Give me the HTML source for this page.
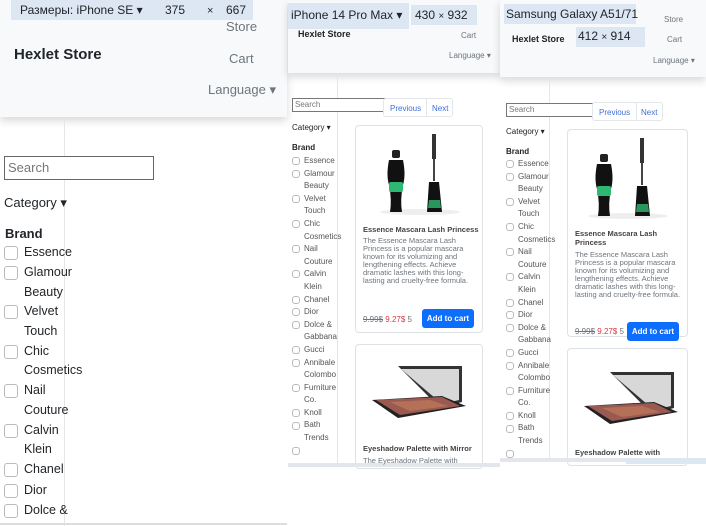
<!DOCTYPE html>
<html><head><meta charset="utf-8"><style>
*{box-sizing:border-box;margin:0;padding:0}
body{width:706px;height:526px;background:#fff;position:relative;overflow:hidden;font-family:"Liberation Sans",sans-serif;color:#212529}
.a{position:absolute;white-space:nowrap}
.hdr{position:absolute;background:#f8f9fa;box-shadow:0 4px 8px rgba(0,0,0,.15)}
.tb{position:absolute;background:#dde6f3;color:#333}
.vl{position:absolute;width:1px;background:#e6e6e6}
.cb{position:absolute;border:1px solid #bbb;border-radius:3px;background:#fff}
.card{position:absolute;border:1px solid #dee2e6;border-radius:4px;background:#fff;overflow:hidden}
.btn{position:absolute;background:#0d6efd;color:#fff;border-radius:3px;text-align:center;font-weight:bold}
.grey{color:#6c757d}
</style></head><body>

<!-- Panel 1 -->
<div class="hdr" style="left:0;top:0;width:287px;height:117px"></div>
<div class="tb" style="left:11px;top:0;width:242px;height:20px"></div>
<div class="a" style="left:20px;top:3px;font-size:12px">Размеры: iPhone SE ▾</div>
<div class="a" style="left:165px;top:3px;font-size:12px">375</div>
<div class="a" style="left:207px;top:5px;font-size:11px">×</div>
<div class="a" style="left:226px;top:3px;font-size:12px">667</div>
<div class="a grey" style="left:226px;top:19px;font-size:13px">Store</div>
<div class="a" style="left:14px;top:46px;font-size:15px;font-weight:bold">Hexlet Store</div>
<div class="a grey" style="left:229px;top:51px;font-size:13px">Cart</div>
<div class="a grey" style="left:208px;top:82px;font-size:13px">Language ▾</div>
<div class="vl" style="left:64px;top:117px;height:409px"></div>
<div class="a" style="left:4px;top:156px;width:150px;height:24px;border:1px solid #666;background:#fff;font-size:13px;color:#777;padding:3px 3px">Search</div>
<div class="a" style="left:4px;top:195px;font-size:13px">Category ▾</div>
<div class="a" style="left:5px;top:226px;font-size:13px;font-weight:bold">Brand</div>

<!-- Panel 2 -->
<div class="hdr" style="left:288px;top:0;width:212px;height:73px"></div>
<div class="tb" style="left:288px;top:3px;width:121px;height:26px"></div>
<div class="a" style="left:291px;top:8px;font-size:12px">iPhone 14 Pro Max ▾</div>
<div class="tb" style="left:411px;top:5px;width:66px;height:20px"></div>
<div class="a" style="left:415px;top:8px;font-size:12px">430 <span style="font-size:10px">×</span> 932</div>
<div class="a" style="left:298px;top:29px;font-size:9px;font-weight:bold">Hexlet Store</div>
<div class="a grey" style="left:461px;top:31px;font-size:8px">Cart</div>
<div class="a grey" style="left:449px;top:51px;font-size:8px">Language ▾</div>
<div class="vl" style="left:337px;top:73px;height:390px"></div>
<div class="a" style="left:292px;top:98px;width:95px;height:14px;border:1px solid #777;border-right:none;background:#fff;font-size:8px;color:#777;padding:1px 2px">Search</div>
<div class="a" style="left:383px;top:98px;width:70px;height:19px;border:1px solid #e3e6ea;border-radius:3px;font-size:8px;color:#3d6fd8;background:#fff"><span style="position:absolute;left:6px;top:5px">Previous</span><span style="position:absolute;left:42px;top:0;height:17px;border-left:1px solid #e3e6ea"></span><span style="position:absolute;left:48px;top:5px">Next</span></div>
<div class="a" style="left:292px;top:123px;font-size:8px">Category ▾</div>
<div class="a" style="left:292px;top:143px;font-size:8px;font-weight:bold">Brand</div>
<div class="card" style="left:355px;top:125px;width:128px;height:208px"></div>
<div class="card" style="left:355px;top:344px;width:128px;height:125px"></div>
<div class="a" style="left:288px;top:463px;width:212px;height:4px;background:#e3e6ea"></div>

<!-- Panel 3 -->
<div class="hdr" style="left:500px;top:0;width:206px;height:77px"></div>
<div class="tb" style="left:504px;top:4px;width:132px;height:20px"></div>
<div class="a" style="left:506px;top:7px;font-size:12px">Samsung Galaxy A51/71</div>
<div class="a grey" style="left:664px;top:15px;font-size:8px">Store</div>
<div class="a" style="left:512px;top:34px;font-size:9px;font-weight:bold">Hexlet Store</div>
<div class="tb" style="left:576px;top:27px;width:69px;height:20px"></div>
<div class="a" style="left:578px;top:29px;font-size:12px">412 <span style="font-size:10px">×</span> 914</div>
<div class="a grey" style="left:667px;top:35px;font-size:8px">Cart</div>
<div class="a grey" style="left:653px;top:56px;font-size:8px">Language ▾</div>
<div class="vl" style="left:549px;top:77px;height:385px"></div>
<div class="a" style="left:506px;top:103px;width:96px;height:14px;border:1px solid #777;border-right:none;background:#fff;font-size:8px;color:#777;padding:1px 2px">Search</div>
<div class="a" style="left:592px;top:102px;width:71px;height:19px;border:1px solid #e3e6ea;border-radius:3px;font-size:8px;color:#3d6fd8;background:#fff"><span style="position:absolute;left:6px;top:5px">Previous</span><span style="position:absolute;left:43px;top:0;height:17px;border-left:1px solid #e3e6ea"></span><span style="position:absolute;left:48px;top:5px">Next</span></div>
<div class="a" style="left:506px;top:127px;font-size:8px">Category ▾</div>
<div class="a" style="left:506px;top:147px;font-size:8px;font-weight:bold">Brand</div>
<div class="card" style="left:567px;top:129px;width:121px;height:208px"></div>
<div class="card" style="left:567px;top:348px;width:121px;height:118px"></div>
<div class="a" style="left:500px;top:458px;width:126px;height:4px;background:#e3e6ea"></div>
<div class="a" style="left:626px;top:458px;width:80px;height:6px;background:#dde6f3"></div>

<!-- Card contents panel 2 -->
<svg class="a" style="left:370px;top:130px" width="100" height="86" viewBox="0 0 100 86">
<ellipse cx="50" cy="82" rx="40" ry="3" fill="#eee"/>
<rect x="22" y="20" width="8" height="8" rx="2" fill="#222"/>
<path d="M19 30 Q16 45 19 55 Q22 70 20 82 L32 82 Q30 70 33 55 Q36 45 33 30 Z" fill="#111"/>
<rect x="19" y="52" width="14" height="10" rx="2" fill="#2fb872"/>
<rect x="62" y="4" width="4" height="25" fill="#333"/>
<rect x="63" y="29" width="2" height="22" fill="#444"/>
<path d="M57 82 L59 52 L69 52 L72 82 Z" fill="#111"/>
<path d="M59 70 L70 70 L71 78 L58 78 Z" fill="#2fb872" opacity=".8"/>
</svg>
<div class="a" style="left:363px;top:225px;font-size:7.5px;font-weight:bold;color:#444">Essence Mascara Lash Princess</div>
<div class="a grey" style="left:363px;top:237px;font-size:7.5px;line-height:8px;white-space:normal;width:112px">The Essence Mascara Lash Princess is a popular mascara known for its volumizing and lengthening effects. Achieve dramatic lashes with this long-lasting and cruelty-free formula.</div>
<div class="a" style="left:363px;top:315px;font-size:8px"><span class="grey" style="text-decoration:line-through">9.99$</span> <span style="color:#dc3545">9.27$</span> <span class="grey">5</span></div>
<div class="btn" style="left:422px;top:309px;width:52px;height:19px;font-size:8px;line-height:19px">Add to cart</div>
<svg class="a" style="left:370px;top:362px" width="100" height="62" viewBox="0 0 100 62">
<path d="M28 4 L92 4 L92 40 L70 46 Z" fill="#333"/>
<path d="M31 7 L89 7 L89 38 L72 42 Z" fill="#d8d8d8"/>
<path d="M2 38 L72 34 L96 44 L28 56 Z" fill="#222"/>
<path d="M6 38 L72 35 L90 44 L30 53 Z" fill="#9a5a52"/>
<path d="M20 40 L60 38 L78 44 L40 49 Z" fill="#c07a5a" opacity=".7"/>
</svg>
<div class="a" style="left:363px;top:444px;font-size:7.5px;font-weight:bold;color:#444">Eyeshadow Palette with Mirror</div>
<div class="a grey" style="left:363px;top:456px;font-size:7.5px">The Eyeshadow Palette with</div>

<!-- Card contents panel 3 -->
<svg class="a" style="left:578px;top:134px" width="100" height="86" viewBox="0 0 100 86">
<ellipse cx="50" cy="82" rx="40" ry="3" fill="#eee"/>
<rect x="22" y="20" width="8" height="8" rx="2" fill="#222"/>
<path d="M19 30 Q16 45 19 55 Q22 70 20 82 L32 82 Q30 70 33 55 Q36 45 33 30 Z" fill="#111"/>
<rect x="19" y="52" width="14" height="10" rx="2" fill="#2fb872"/>
<rect x="62" y="4" width="4" height="25" fill="#333"/>
<rect x="63" y="29" width="2" height="22" fill="#444"/>
<path d="M57 82 L59 52 L69 52 L72 82 Z" fill="#111"/>
<path d="M59 70 L70 70 L71 78 L58 78 Z" fill="#2fb872" opacity=".8"/>
</svg>
<div class="a" style="left:575px;top:229px;font-size:7.5px;font-weight:bold;color:#444;line-height:9px">Essence Mascara Lash<br>Princess</div>
<div class="a grey" style="left:575px;top:251px;font-size:7.5px;line-height:8px;white-space:normal;width:108px">The Essence Mascara Lash Princess is a popular mascara known for its volumizing and lengthening effects. Achieve dramatic lashes with this long-lasting and cruelty-free formula.</div>
<div class="a" style="left:575px;top:327px;font-size:8px"><span class="grey" style="text-decoration:line-through">9.99$</span> <span style="color:#dc3545">9.27$</span> <span class="grey">5</span></div>
<div class="btn" style="left:627px;top:322px;width:52px;height:19px;font-size:8px;line-height:19px">Add to cart</div>
<svg class="a" style="left:582px;top:368px" width="100" height="62" viewBox="0 0 100 62">
<path d="M28 4 L92 4 L92 40 L70 46 Z" fill="#333"/>
<path d="M31 7 L89 7 L89 38 L72 42 Z" fill="#d8d8d8"/>
<path d="M2 38 L72 34 L96 44 L28 56 Z" fill="#222"/>
<path d="M6 38 L72 35 L90 44 L30 53 Z" fill="#9a5a52"/>
<path d="M20 40 L60 38 L78 44 L40 49 Z" fill="#c07a5a" opacity=".7"/>
</svg>
<div class="a" style="left:575px;top:448px;font-size:7.5px;font-weight:bold;color:#444">Eyeshadow Palette with</div>

<!-- Panel 1 bottom line -->
<div class="a" style="left:0;top:523px;width:287px;height:2px;background:#ddd"></div>

<!-- Brand lists -->
<div class="cb" style="left:4px;top:246px;width:14px;height:14px"></div><div class="a" style="left:24px;top:245px;font-size:12.5px">Essence</div>
<div class="cb" style="left:4px;top:266px;width:14px;height:14px"></div><div class="a" style="left:24px;top:265px;font-size:12.5px">Glamour</div><div class="a" style="left:24px;top:285px;font-size:12.5px">Beauty</div>
<div class="cb" style="left:4px;top:305px;width:14px;height:14px"></div><div class="a" style="left:24px;top:304px;font-size:12.5px">Velvet</div><div class="a" style="left:24px;top:324px;font-size:12.5px">Touch</div>
<div class="cb" style="left:4px;top:345px;width:14px;height:14px"></div><div class="a" style="left:24px;top:344px;font-size:12.5px">Chic</div><div class="a" style="left:24px;top:363px;font-size:12.5px">Cosmetics</div>
<div class="cb" style="left:4px;top:384px;width:14px;height:14px"></div><div class="a" style="left:24px;top:383px;font-size:12.5px">Nail</div><div class="a" style="left:24px;top:403px;font-size:12.5px">Couture</div>
<div class="cb" style="left:4px;top:424px;width:14px;height:14px"></div><div class="a" style="left:24px;top:423px;font-size:12.5px">Calvin</div><div class="a" style="left:24px;top:442px;font-size:12.5px">Klein</div>
<div class="cb" style="left:4px;top:463px;width:14px;height:14px"></div><div class="a" style="left:24px;top:462px;font-size:12.5px">Chanel</div>
<div class="cb" style="left:4px;top:484px;width:14px;height:14px"></div><div class="a" style="left:24px;top:483px;font-size:12.5px">Dior</div>
<div class="cb" style="left:4px;top:504px;width:14px;height:14px"></div><div class="a" style="left:24px;top:503px;font-size:12.5px">Dolce &amp;</div>

<div style="position:absolute;left:292px;top:155px;font-size:8px;line-height:12.6px;color:#555">
<div style="position:relative;padding-left:12px">
<span class="cb" style="left:0;top:2px;width:8px;height:8px"></span>Essence<br>
<span class="cb" style="left:0;top:15px;width:8px;height:8px"></span>Glamour<br>Beauty<br>
<span class="cb" style="left:0;top:40px;width:8px;height:8px"></span>Velvet<br>Touch<br>
<span class="cb" style="left:0;top:65px;width:8px;height:8px"></span>Chic<br>Cosmetics<br>
<span class="cb" style="left:0;top:90px;width:8px;height:8px"></span>Nail<br>Couture<br>
<span class="cb" style="left:0;top:115px;width:8px;height:8px"></span>Calvin<br>Klein<br>
<span class="cb" style="left:0;top:141px;width:8px;height:8px"></span>Chanel<br>
<span class="cb" style="left:0;top:153px;width:8px;height:8px"></span>Dior<br>
<span class="cb" style="left:0;top:166px;width:8px;height:8px"></span>Dolce &amp;<br>Gabbana<br>
<span class="cb" style="left:0;top:191px;width:8px;height:8px"></span>Gucci<br>
<span class="cb" style="left:0;top:204px;width:8px;height:8px"></span>Annibale<br>Colombo<br>
<span class="cb" style="left:0;top:229px;width:8px;height:8px"></span>Furniture<br>Co.<br>
<span class="cb" style="left:0;top:254px;width:8px;height:8px"></span>Knoll<br>
<span class="cb" style="left:0;top:267px;width:8px;height:8px"></span>Bath<br>Trends<br>
<span class="cb" style="left:0;top:292px;width:8px;height:8px"></span>&nbsp;
</div></div>

<div style="position:absolute;left:506px;top:158px;font-size:8px;line-height:12.6px;color:#555">
<div style="position:relative;padding-left:12px">
<span class="cb" style="left:0;top:2px;width:8px;height:8px"></span>Essence<br>
<span class="cb" style="left:0;top:15px;width:8px;height:8px"></span>Glamour<br>Beauty<br>
<span class="cb" style="left:0;top:40px;width:8px;height:8px"></span>Velvet<br>Touch<br>
<span class="cb" style="left:0;top:65px;width:8px;height:8px"></span>Chic<br>Cosmetics<br>
<span class="cb" style="left:0;top:90px;width:8px;height:8px"></span>Nail<br>Couture<br>
<span class="cb" style="left:0;top:115px;width:8px;height:8px"></span>Calvin<br>Klein<br>
<span class="cb" style="left:0;top:141px;width:8px;height:8px"></span>Chanel<br>
<span class="cb" style="left:0;top:153px;width:8px;height:8px"></span>Dior<br>
<span class="cb" style="left:0;top:166px;width:8px;height:8px"></span>Dolce &amp;<br>Gabbana<br>
<span class="cb" style="left:0;top:191px;width:8px;height:8px"></span>Gucci<br>
<span class="cb" style="left:0;top:204px;width:8px;height:8px"></span>Annibale<br>Colombo<br>
<span class="cb" style="left:0;top:229px;width:8px;height:8px"></span>Furniture<br>Co.<br>
<span class="cb" style="left:0;top:254px;width:8px;height:8px"></span>Knoll<br>
<span class="cb" style="left:0;top:267px;width:8px;height:8px"></span>Bath<br>Trends<br>
<span class="cb" style="left:0;top:292px;width:8px;height:8px"></span>&nbsp;
</div></div>

</body></html>
